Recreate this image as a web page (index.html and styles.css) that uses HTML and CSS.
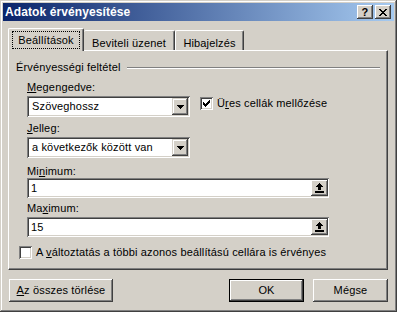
FILE: index.html
```html
<!DOCTYPE html>
<html lang="hu">
<head>
<meta charset="utf-8">
<link rel="stylesheet" href="styles.css">
</head>
<body>
<div class="window">
  <div class="titlebar">
    <span class="title">Adatok érvényesítése</span>
    <div class="tb-buttons">
      <span class="tb-btn tb-help">?</span>
      <span class="tb-btn"><svg width="8" height="7" viewBox="0 0 8 7" shape-rendering="crispEdges"><path d="M0 0h2v1H0zM6 0h2v1H6zM1 1h2v1H1zM5 1h2v1H5zM2 2h4v1H2zM3 3h2v1H3zM2 4h4v1H2zM1 5h2v1H1zM5 5h2v1H5zM0 6h2v1H0zM6 6h2v1H6z" fill="#000"/></svg></span>
    </div>
  </div>
  <div class="content">
    <div class="tabs">
      <div class="tab tab-active"><span class="focus">Beállítások</span></div>
      <div class="tab tab-2">Beviteli üzenet</div>
      <div class="tab tab-3">Hibajelzés</div>
    </div>
    <div class="panel">
      <div class="group-head"><span>Érvényességi feltétel</span><span class="rule"></span></div>
      <div class="fields">
        <div class="lbl lbl-first"><u>M</u>egengedve:</div>
        <div class="row">
          <div class="combo"><span class="val">Szöveghossz</span><span class="drop"><svg width="7" height="4" viewBox="0 0 7 4" shape-rendering="crispEdges"><path d="M0 0h7v1H0zM1 1h5v1H1zM2 2h3v1H2zM3 3h1v1H3z" fill="#000"/></svg></span></div>
          <div class="check check-top"><span class="box"><svg width="7" height="7" viewBox="0 0 7 7" shape-rendering="crispEdges"><path d="M0 2h1v3H0zM1 3h1v3H1zM2 4h1v3H2zM3 3h1v3H3zM4 2h1v3H4zM5 1h1v3H5zM6 0h1v3H6z" fill="#000"/></svg></span><span>Ü<u>r</u>es cellák mellőzése</span></div>
        </div>
        <div class="lbl lbl-jelleg"><u>J</u>elleg:</div>
        <div class="row">
          <div class="combo"><span class="val">a következők között van</span><span class="drop"><svg width="7" height="4" viewBox="0 0 7 4" shape-rendering="crispEdges"><path d="M0 0h7v1H0zM1 1h5v1H1zM2 2h3v1H2zM3 3h1v1H3z" fill="#000"/></svg></span></div>
        </div>
        <div class="lbl lbl-min">Mi<u>n</u>imum:</div>
        <div class="input input-min"><span class="val">1</span><span class="ref"><svg width="9" height="10" viewBox="0 0 9 10" shape-rendering="crispEdges"><path d="M4 0h1v1H4zM3 1h3v1H3zM2 2h5v1H2zM1 3h7v1H1zM3 4h3v3H3zM0 8h9v2H0z" fill="#000"/></svg></span></div>
        <div class="lbl lbl-max">Ma<u>x</u>imum:</div>
        <div class="input input-max"><span class="val">15</span><span class="ref"><svg width="9" height="10" viewBox="0 0 9 10" shape-rendering="crispEdges"><path d="M4 0h1v1H4zM3 1h3v1H3zM2 2h5v1H2zM1 3h7v1H1zM3 4h3v3H3zM0 8h9v2H0z" fill="#000"/></svg></span></div>
      </div>
      <div class="check check-bottom"><span class="box"></span><span>A <u>v</u>áltoztatás a többi azonos beállítású cellára is érvényes</span></div>
    </div>
    <div class="footer">
      <span class="btn btn-clear"><u>A</u>z összes törlése</span>
      <div class="btn-group">
        <span class="btn btn-default">OK</span>
        <span class="btn">Mégse</span>
      </div>
    </div>
  </div>
</div>
</body>
</html>
```
FILE: styles.css
```css
html, body {
  margin: 0;
  padding: 0;
  background: #d4d0c8;
}
body {
  font-family: "Liberation Sans", Arial, sans-serif;
  font-size: 11px;
  line-height: 13px;
  letter-spacing: 0.15px;
  color: #000;
}
u {
  text-decoration: underline;
  text-underline-offset: 1px;
}
.window {
  width: 397px;
  height: 312px;
  box-sizing: border-box;
  padding: 3px;
  background: #d4d0c8;
  box-shadow: inset -1px -1px 0 #404040, inset 1px 1px 0 #d4d0c8, inset -2px -2px 0 #808080, inset 2px 2px 0 #ffffff;
}
.titlebar {
  height: 18px;
  display: flex;
  align-items: center;
  justify-content: space-between;
  padding: 0 3px 0 2px;
  background: linear-gradient(to right, #0a246a, #a6caf0);
}
.title {
  color: #fff;
  font-weight: bold;
  font-size: 12px;
  letter-spacing: 0.1px;
}
.tb-buttons {
  display: flex;
  gap: 2px;
}
.tb-btn {
  width: 16px;
  height: 14px;
  box-sizing: border-box;
  display: flex;
  align-items: center;
  justify-content: center;
  background: #d4d0c8;
  box-shadow: inset -1px -1px 0 #404040, inset 1px 1px 0 #ffffff, inset -2px -2px 0 #808080;
}
.tb-help {
  font-weight: bold;
  font-size: 11px;
  line-height: 14px;
  padding-bottom: 1px;
}
.content {
  padding: 7px 5px 0 5px;
}
.tabs {
  display: flex;
  align-items: flex-end;
  height: 22px;
}
.tab {
  box-sizing: border-box;
  height: 20px;
  padding-top: 6px;
  text-align: center;
  background: #d4d0c8;
  border-top: 1px solid #fff;
  border-left: 1px solid #fff;
  border-right: 1px solid #404040;
  border-radius: 2px 2px 0 0;
  box-shadow: inset -1px 0 0 #808080;
}
.tab-active {
  width: 76px;
  height: 23px;
  margin-bottom: -1px;
  padding: 2px 3px 0 3px;
  position: relative;
  z-index: 1;
}
.focus {
  display: block;
  box-sizing: border-box;
  height: 18px;
  line-height: 16px;
  border: 1px dotted #000;
}
.tab-2 {
  width: 91px;
  border-left: none;
}
.tab-3 {
  width: 69px;
}
.panel {
  width: 380px;
  height: 220px;
  box-sizing: border-box;
  border: 1px solid;
  border-color: #fff #404040 #404040 #fff;
  box-shadow: inset -1px -1px 0 #808080;
  padding: 10px 0 0 7px;
}
.group-head {
  display: flex;
  height: 13px;
}
.rule {
  flex: 1;
  align-self: flex-start;
  margin: 6px 7px 0 6px;
  height: 0;
  border-top: 1px solid #808080;
  border-bottom: 1px solid #fff;
}
.fields {
  margin-left: 11px;
  display: flex;
  flex-direction: column;
}
.lbl {
  height: 13px;
}
.lbl-first { margin-top: 7px; margin-bottom: 2px; }
.lbl-jelleg { margin-top: 5px; margin-bottom: 2px; }
.lbl-min { margin-top: 7px; margin-bottom: 0; }
.lbl-max { margin-top: 4px; margin-bottom: 2px; }
.row {
  display: flex;
  align-items: flex-start;
}
.combo, .input {
  box-sizing: border-box;
  height: 21px;
  background: #fff;
  display: flex;
  align-items: center;
  padding: 2px;
  box-shadow: inset 1px 1px 0 #808080, inset -1px -1px 0 #ffffff, inset 2px 2px 0 #404040, inset -2px -2px 0 #d4d0c8;
}
.combo {
  width: 163px;
}
.combo .val {
  flex: 1;
  padding-left: 3px;
}
.drop {
  width: 16px;
  height: 17px;
  box-sizing: border-box;
  background: #d4d0c8;
  display: flex;
  align-items: center;
  justify-content: center;
  padding-top: 1px;
  box-shadow: inset -1px -1px 0 #404040, inset 1px 1px 0 #d4d0c8, inset -2px -2px 0 #808080, inset 2px 2px 0 #ffffff;
}
.input {
  width: 302px;
  height: 20px;
  padding: 2px 1px 2px 2px;
}
.input .val {
  flex: 1;
  padding-left: 2px;
  padding-top: 1px;
}
.ref {
  width: 17px;
  height: 16px;
  box-sizing: border-box;
  background: #d4d0c8;
  display: flex;
  align-items: center;
  justify-content: center;
  box-shadow: inset -1px -1px 0 #404040, inset 1px 1px 0 #ffffff, inset -2px -2px 0 #808080;
}
.check {
  display: flex;
  align-items: center;
  gap: 4px;
}
.check-top {
  margin: 1px 0 0 10px;
}
.check-bottom {
  margin: 9px 0 0 3px;
}
.box {
  width: 13px;
  height: 13px;
  box-sizing: border-box;
  background: #fff;
  display: flex;
  align-items: center;
  justify-content: center;
  box-shadow: inset 1px 1px 0 #808080, inset -1px -1px 0 #ffffff, inset 2px 2px 0 #404040, inset -2px -2px 0 #d4d0c8;
}
.footer {
  width: 380px;
  margin-top: 9px;
  display: flex;
  justify-content: space-between;
}
.btn-group {
  display: flex;
  gap: 9px;
}
.btn {
  box-sizing: border-box;
  width: 75px;
  height: 23px;
  display: flex;
  align-items: center;
  justify-content: center;
  background: #d4d0c8;
  box-shadow: inset -1px -1px 0 #404040, inset 1px 1px 0 #ffffff, inset -2px -2px 0 #808080;
}
.btn-clear {
  width: 104px;
  margin-left: 1px;
}
.btn-default {
  border: 1px solid #000;
  box-shadow: inset -1px -1px 0 #404040, inset 1px 1px 0 #ffffff, inset -2px -2px 0 #808080;
}
```
